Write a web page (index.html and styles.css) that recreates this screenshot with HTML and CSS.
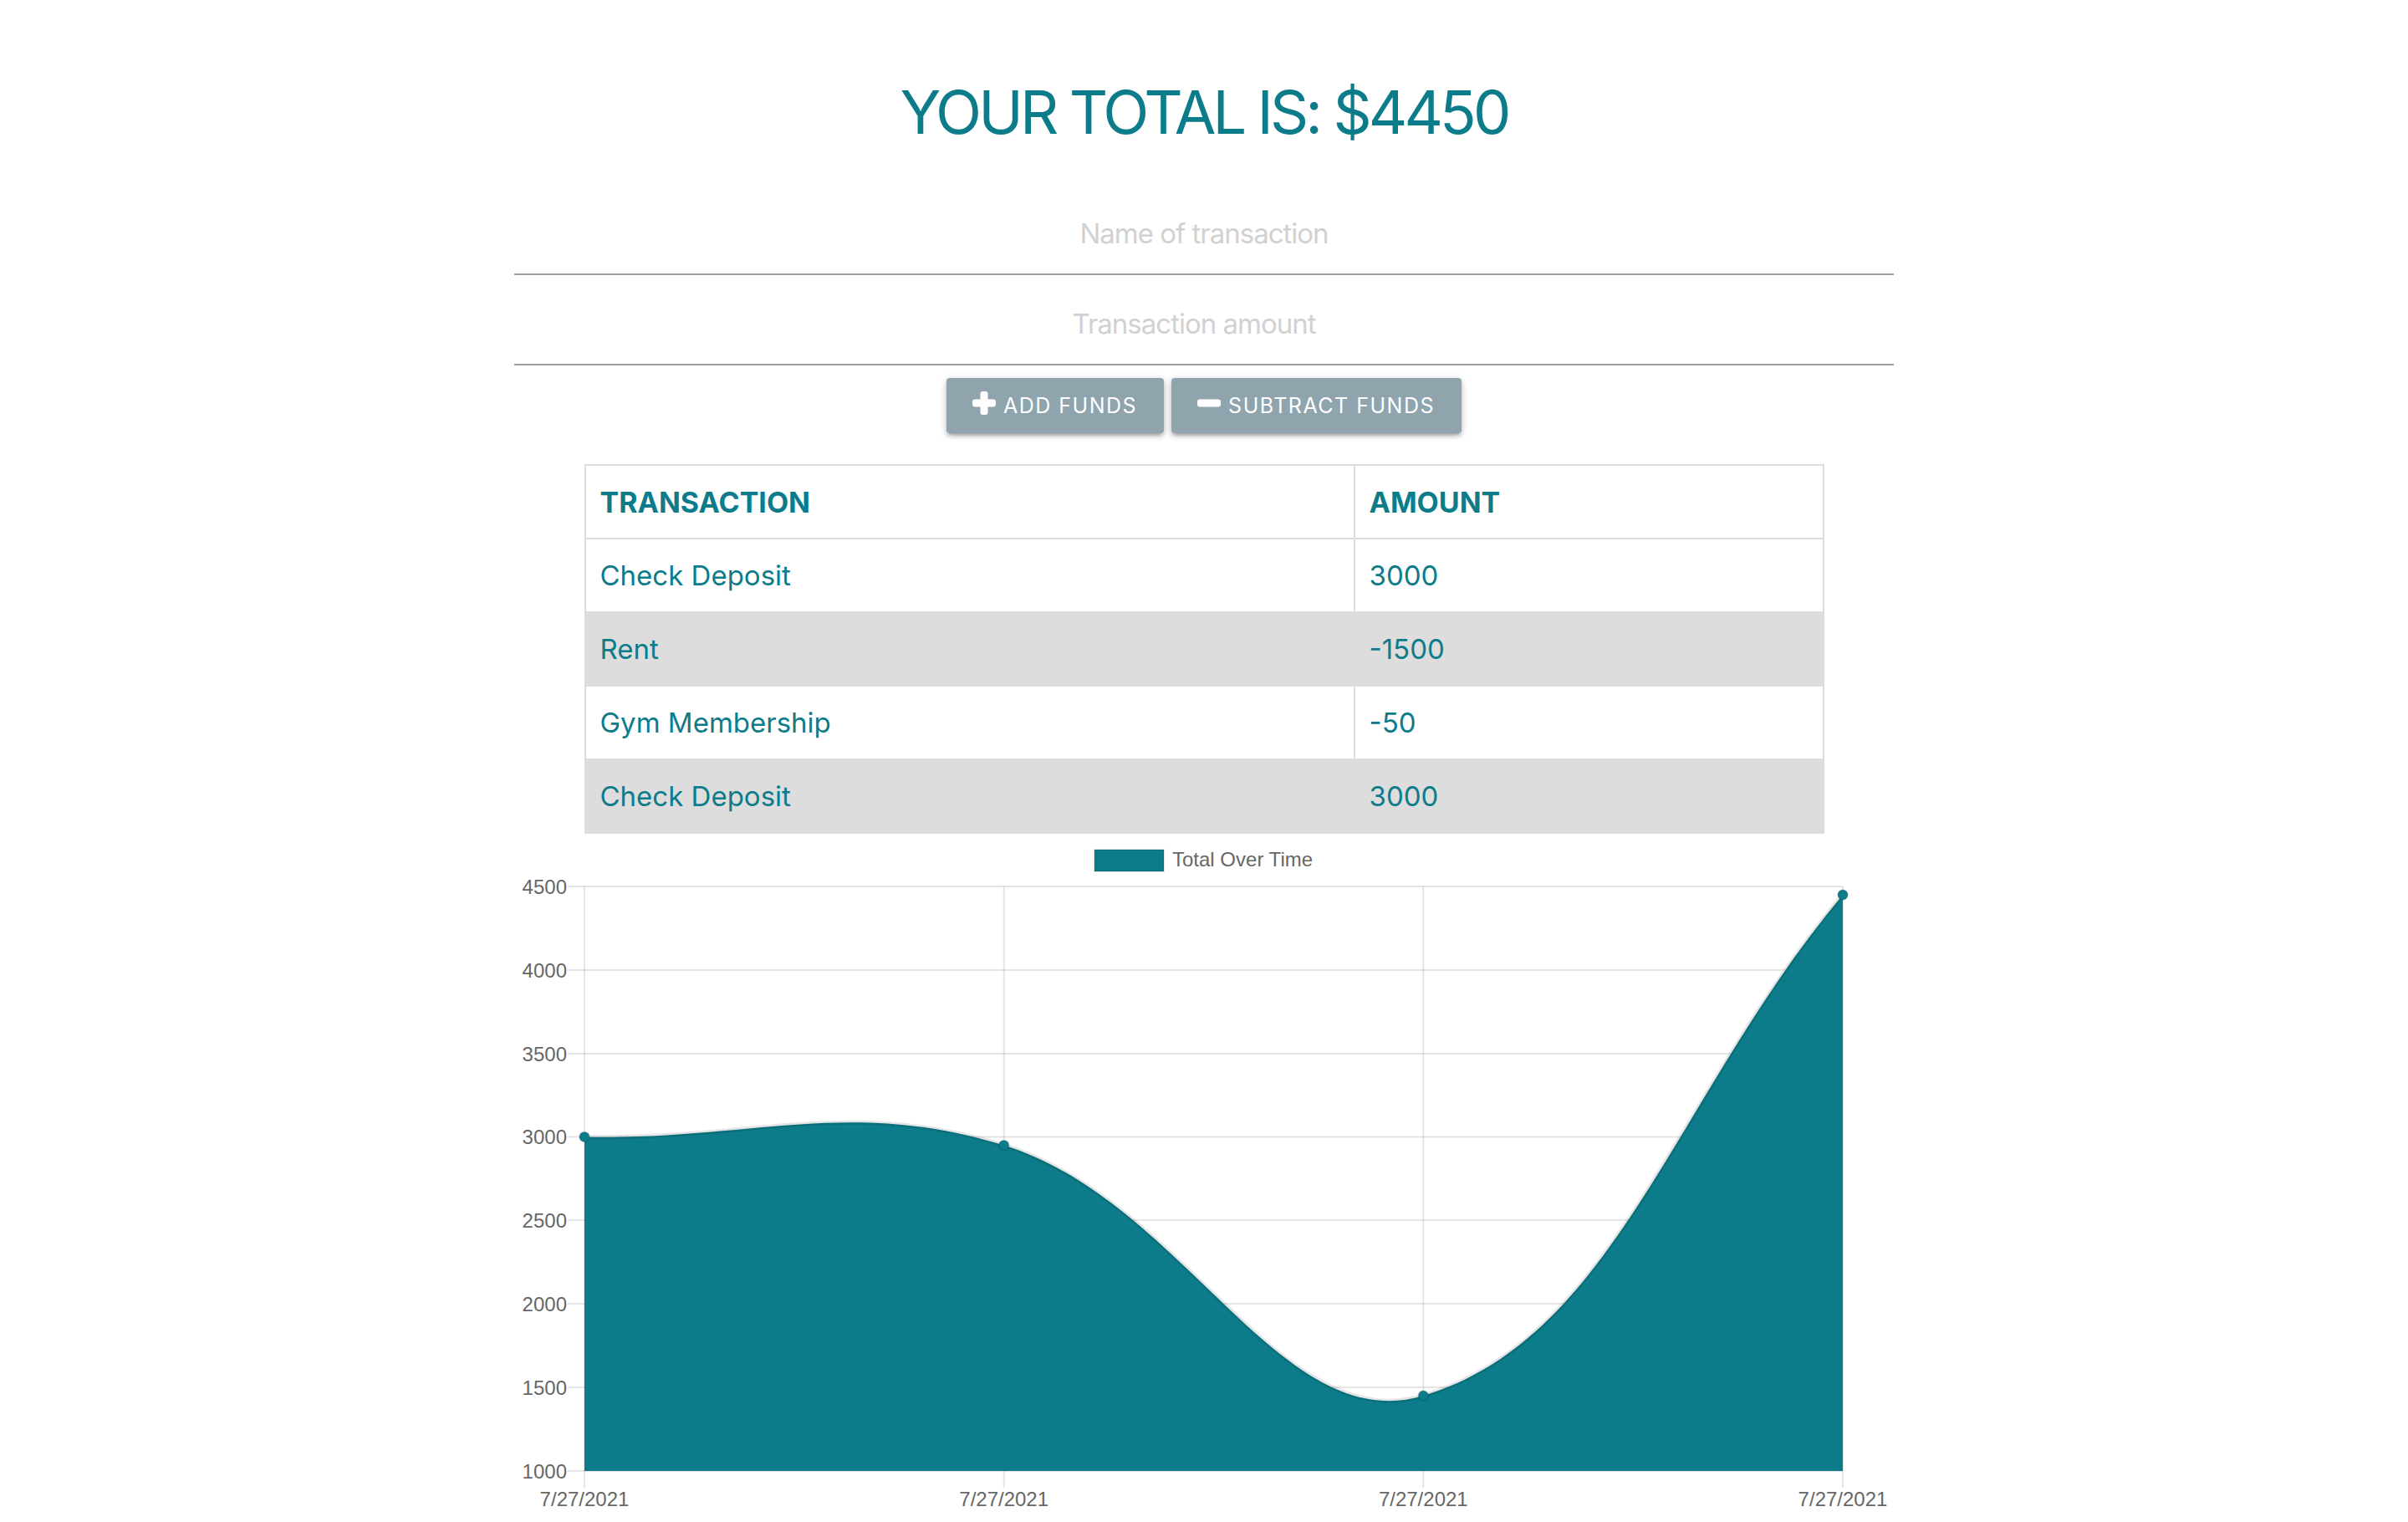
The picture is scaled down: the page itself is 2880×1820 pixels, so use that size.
FILE: index.html
```html
<!DOCTYPE html>
<html lang="en">
<head>
<meta charset="utf-8">
<title>Budget Tracker</title>
<link rel="stylesheet" href="styles.css">
</head>
<body>
<main class="container">
  <h1 class="total">YOUR TOTAL IS: $<span class="total-value">4450</span></h1>
  <form class="entry-form">
    <input class="field" type="text" placeholder="Name of transaction">
    <input class="field field-number" type="number" placeholder="Transaction amount">
    <div class="actions">
      <button type="button" class="btn">
        <svg class="btn-icon" viewBox="0 0 28 28" aria-hidden="true"><rect x="9.5" y="0" width="9" height="28" rx="3"/><rect x="0" y="9.5" width="28" height="9" rx="3"/></svg>
        <span>Add Funds</span>
      </button>
      <button type="button" class="btn">
        <svg class="btn-icon" viewBox="0 0 28 28" aria-hidden="true"><rect x="0" y="9.5" width="28" height="9" rx="3"/></svg>
        <span>Subtract Funds</span>
      </button>
    </div>
  </form>
  <table class="ledger">
    <thead>
      <tr><th class="col-name">Transaction</th><th>Amount</th></tr>
    </thead>
    <tbody>
      <tr><td>Check Deposit</td><td>3000</td></tr>
      <tr><td>Rent</td><td>-1500</td></tr>
      <tr><td>Gym Membership</td><td>-50</td></tr>
      <tr><td>Check Deposit</td><td>3000</td></tr>
    </tbody>
  </table>
  <svg class="chart" width="1650" height="820" viewBox="616 1000 1650 820" aria-label="Total Over Time">
    <g class="legend">
      <rect x="1310" y="1016" width="83" height="26" class="legend-box"/>
      <text x="1403" y="1036" class="chart-text">Total Over Time</text>
    </g>
    <g class="grid">
      <line x1="680" y1="1060" x2="2205" y2="1060"/>
      <line x1="680" y1="1160" x2="2205" y2="1160"/>
      <line x1="680" y1="1260" x2="2205" y2="1260"/>
      <line x1="680" y1="1359.5" x2="2205" y2="1359.5"/>
      <line x1="680" y1="1459" x2="2205" y2="1459"/>
      <line x1="680" y1="1559" x2="2205" y2="1559"/>
      <line x1="680" y1="1659" x2="2205" y2="1659"/>
      <line x1="680" y1="1759" x2="2205" y2="1759"/>
      <line x1="700" y1="1060" x2="700" y2="1779"/>
      <line x1="1201.7" y1="1060" x2="1201.7" y2="1779"/>
      <line x1="1703.3" y1="1060" x2="1703.3" y2="1779"/>
      <line x1="2205" y1="1060" x2="2205" y2="1779"/>
    </g>
    <path class="area" d="M700,1359.5 C900.7,1363.5 1016.3,1312.2 1201.7,1369.5 C1417.6,1436.2 1531.6,1720.3 1703.3,1669 C1933,1600.4 2004.3,1309.6 2205,1070 L2205,1759 L700,1759 Z"/>
    <path class="line" d="M700,1359.5 C900.7,1363.5 1016.3,1312.2 1201.7,1369.5 C1417.6,1436.2 1531.6,1720.3 1703.3,1669 C1933,1600.4 2004.3,1309.6 2205,1070"/>
    <g class="points">
      <circle cx="700" cy="1359.5" r="6"/>
      <circle cx="1201.7" cy="1369.5" r="6"/>
      <circle cx="1703.3" cy="1669" r="6"/>
      <circle cx="2205" cy="1070" r="6"/>
    </g>
    <g class="y-labels chart-text">
      <text x="679" y="1068.5">4500</text>
      <text x="679" y="1168.5">4000</text>
      <text x="679" y="1268.5">3500</text>
      <text x="679" y="1368">3000</text>
      <text x="679" y="1467.5">2500</text>
      <text x="679" y="1567.5">2000</text>
      <text x="679" y="1667.5">1500</text>
      <text x="679" y="1767.5">1000</text>
    </g>
    <g class="x-labels chart-text">
      <text x="700" y="1801">7/27/2021</text>
      <text x="1201.7" y="1801">7/27/2021</text>
      <text x="1703.3" y="1801">7/27/2021</text>
      <text x="2205" y="1801">7/27/2021</text>
    </g>
  </svg>
</main>
</body>
</html>
```
FILE: styles.css
```css
html, body {
  margin: 0;
  padding: 0;
  background: #ffffff;
}

body {
  font-family: Inter, "Noto Sans", sans-serif;
  color: #0d7c8a;
}

.container {
  width: 1650px;
  margin: 0 auto;
  display: flex;
  flex-direction: column;
  align-items: center;
}

.total {
  margin: 90px 0 0 0;
  font-size: 72px;
  line-height: 88px;
  font-weight: 400;
  letter-spacing: -3.9px;
  color: #0d7c8a;
  text-align: center;
}

.entry-form {
  width: 100%;
  margin-top: 53px;
  display: flex;
  flex-direction: column;
}

.field {
  box-sizing: content-box;
  width: 100%;
  height: 96px;
  padding: 0;
  margin: 0 0 10px 0;
  border: none;
  border-bottom: 2px solid #9e9e9e;
  outline: none;
  background: transparent;
  font-family: Inter, "Noto Sans", sans-serif;
  font-size: 33px;
  letter-spacing: -1px;
  text-align: center;
  color: #333;
}

.field::placeholder {
  color: #d1d1d1;
}

.field-number {
  box-sizing: border-box;
  height: 98px;
  padding-right: 24px;
}

.field-number::-webkit-inner-spin-button,
.field-number::-webkit-outer-spin-button {
  -webkit-appearance: none;
  margin: 0;
}

.actions {
  margin-top: 5px;
  display: flex;
  justify-content: center;
  gap: 9px;
}

.btn {
  display: inline-flex;
  align-items: center;
  gap: 9px;
  height: 66px;
  padding: 0 32px 0 31px;
  border: none;
  border-radius: 4px;
  background: #90a4ae;
  color: #ffffff;
  font-family: Inter, "Noto Sans", sans-serif;
  font-size: 25px;
  letter-spacing: 1.5px;
  text-transform: uppercase;
  box-shadow: 0 4px 4px 0 rgba(0,0,0,0.14), 0 6px 2px -4px rgba(0,0,0,0.12), 0 2px 10px 0 rgba(0,0,0,0.2);
  cursor: pointer;
}

.btn-icon {
  width: 28px;
  height: 28px;
  margin-bottom: 7px;
  fill: #ffffff;
  flex: none;
}

.ledger {
  margin-top: 37px;
  width: 1483px;
  border-collapse: collapse;
  border: 2px solid #dddddd;
  color: #0d7c8a;
  font-size: 33px;
}

.ledger th,
.ledger td {
  border: 2px solid #dddddd;
  height: 86px;
  padding: 0 17px;
  text-align: left;
}

.ledger th {
  font-weight: 700;
  font-size: 34px;
  text-transform: uppercase;
}

.ledger .col-name {
  width: 884px;
}

.ledger tbody tr:nth-child(even) {
  background: #dddddd;
}

.chart {
  display: block;
  margin-top: 3px;
}

.chart-text {
  font-family: "Liberation Sans", Arial, sans-serif;
  font-size: 24px;
  fill: #666666;
}

.legend-box {
  fill: #0d7c8a;
  stroke: rgba(0,0,0,0.1);
  stroke-width: 2;
}

.grid line {
  stroke: rgba(0,0,0,0.1);
  stroke-width: 2;
}

.area {
  fill: #0d7c8a;
}

.line {
  fill: none;
  stroke: rgba(0,0,0,0.1);
  stroke-width: 5;
}

.points circle {
  fill: #0d7c8a;
  stroke: rgba(0,0,0,0.1);
  stroke-width: 2;
}

.y-labels text {
  text-anchor: end;
}

.x-labels text {
  text-anchor: middle;
}
```
